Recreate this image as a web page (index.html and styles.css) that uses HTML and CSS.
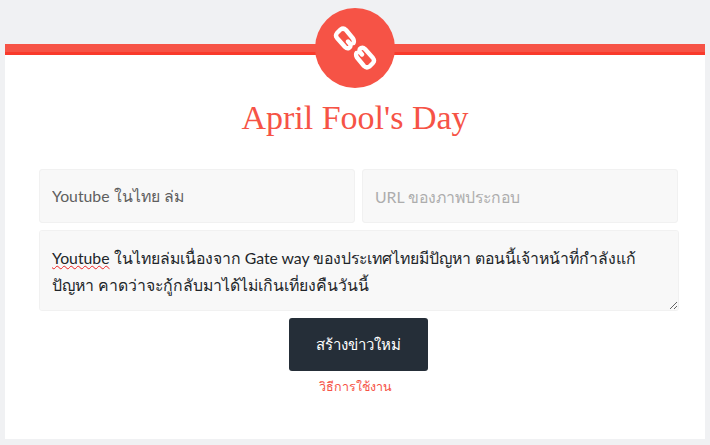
FILE: index.html
```html
<!DOCTYPE html>
<html lang="th">
<head>
    <meta charset="utf-8">
    <meta name="viewport" content="width=device-width, initial-scale=1.0">
    <title>April Fool's Day</title>
    <link rel="stylesheet" href="styles.css">
</head>
<body>
    <div class="card">
        <div class="badge">
            <svg class="badge-icon" viewBox="0 0 44 44" width="44" height="44" aria-hidden="true">
                <g fill="none" stroke="#fff" stroke-width="4.4" stroke-linejoin="round" stroke-linecap="round">
                    <path d="M15 15.5 L17.5 18.5 Q18 21 16 22 Q14 23 12 21 L4 12 Q2 9.5 4 7 L7.5 3.5 Q10.5 1.5 13 4 L20 12.5 Q21.5 15 20.5 17"/>
                    <path d="M29 28.5 L26.5 25.5 Q26 23 28 22 Q30 21 32 23 L40 32 Q42 34.5 40 37 L36.5 40.5 Q33.5 42.5 31 40 L24 31.5 Q22.5 29 23.5 27"/>
                </g>
            </svg>
        </div>
        <h1 class="title">April Fool's Day</h1>
        <form class="news-form">
            <div class="form-row">
                <input class="field" type="text" value="Youtube ในไทย ล่ม">
                <input class="field" type="text" placeholder="URL ของภาพประกอบ">
            </div>
            <div class="field field-area"><span class="misspelled">Youtube</span> ในไทยล่มเนื่องจาก Gate way ของประเทศไทยมีปัญหา ตอนนี้เจ้าหน้าที่กำลังแก้ปัญหา คาดว่าจะกู้กลับมาได้ไม่เกินเที่ยงคืนวันนี้</div>
            <button class="submit-btn" type="button">สร้างข่าวใหม่</button>
            <a class="help-link" href="#">วิธีการใช้งาน</a>
        </form>
    </div>
</body>
</html>
```

FILE: styles.css
```css
body {
    margin: 0;
    padding: 44px 5px 6px;
    background-color: #f0f1f3;
    font-family: Lato, "Noto Sans", sans-serif;
    color: #212529;
}
.card {
    display: flex;
    flex-direction: column;
    align-items: center;
    height: 395px;
    box-sizing: border-box;
    background-color: #fff;
    border-top: 8px solid #f65346;
    box-shadow: inset 0 3px 0 #f93a2b;
}
.badge {
    display: flex;
    align-items: center;
    justify-content: center;
    width: 80px;
    height: 80px;
    margin-top: -44px;
    border-radius: 50%;
    background-color: #f65346;
}
.title {
    margin: 8px 0 0;
    font-family: "Liberation Serif", serif;
    font-size: 34px;
    line-height: 44px;
    font-weight: 400;
    color: #f65346;
}
.news-form {
    display: flex;
    flex-direction: column;
    align-items: center;
    gap: 7px;
    width: 640px;
    margin: 29px 0 0 8px;
}
.form-row {
    display: flex;
    gap: 7px;
    width: 100%;
    padding-right: 1px;
    box-sizing: border-box;
}
.field {
    width: 100%;
    height: 54px;
    box-sizing: border-box;
    padding: 0 12px;
    background-color: #f8f8f8;
    border: 1px solid #f1f1f1;
    border-radius: 3px;
    font-family: inherit;
    font-size: 15.8px;
    color: #5f5f5f;
}
.field::placeholder { color: #adadad; }
.field-area {
    height: 81px;
    padding: 13px 12px;
    line-height: 27px;
    color: #212529;
    overflow: auto;
    resize: vertical;
}
.misspelled { text-decoration: underline wavy #e22 1px; }
.submit-btn {
    width: 139px;
    height: 53px;
    margin-left: -1px;
    padding: 0;
    background-color: #252e38;
    color: #fff;
    border: none;
    border-radius: 3px;
    font-family: inherit;
    font-size: 15px;
}
.help-link {
    margin: -1px 0 0 -8px;
    font-size: 12.5px;
    color: #f65346;
    text-decoration: none;
}
```
